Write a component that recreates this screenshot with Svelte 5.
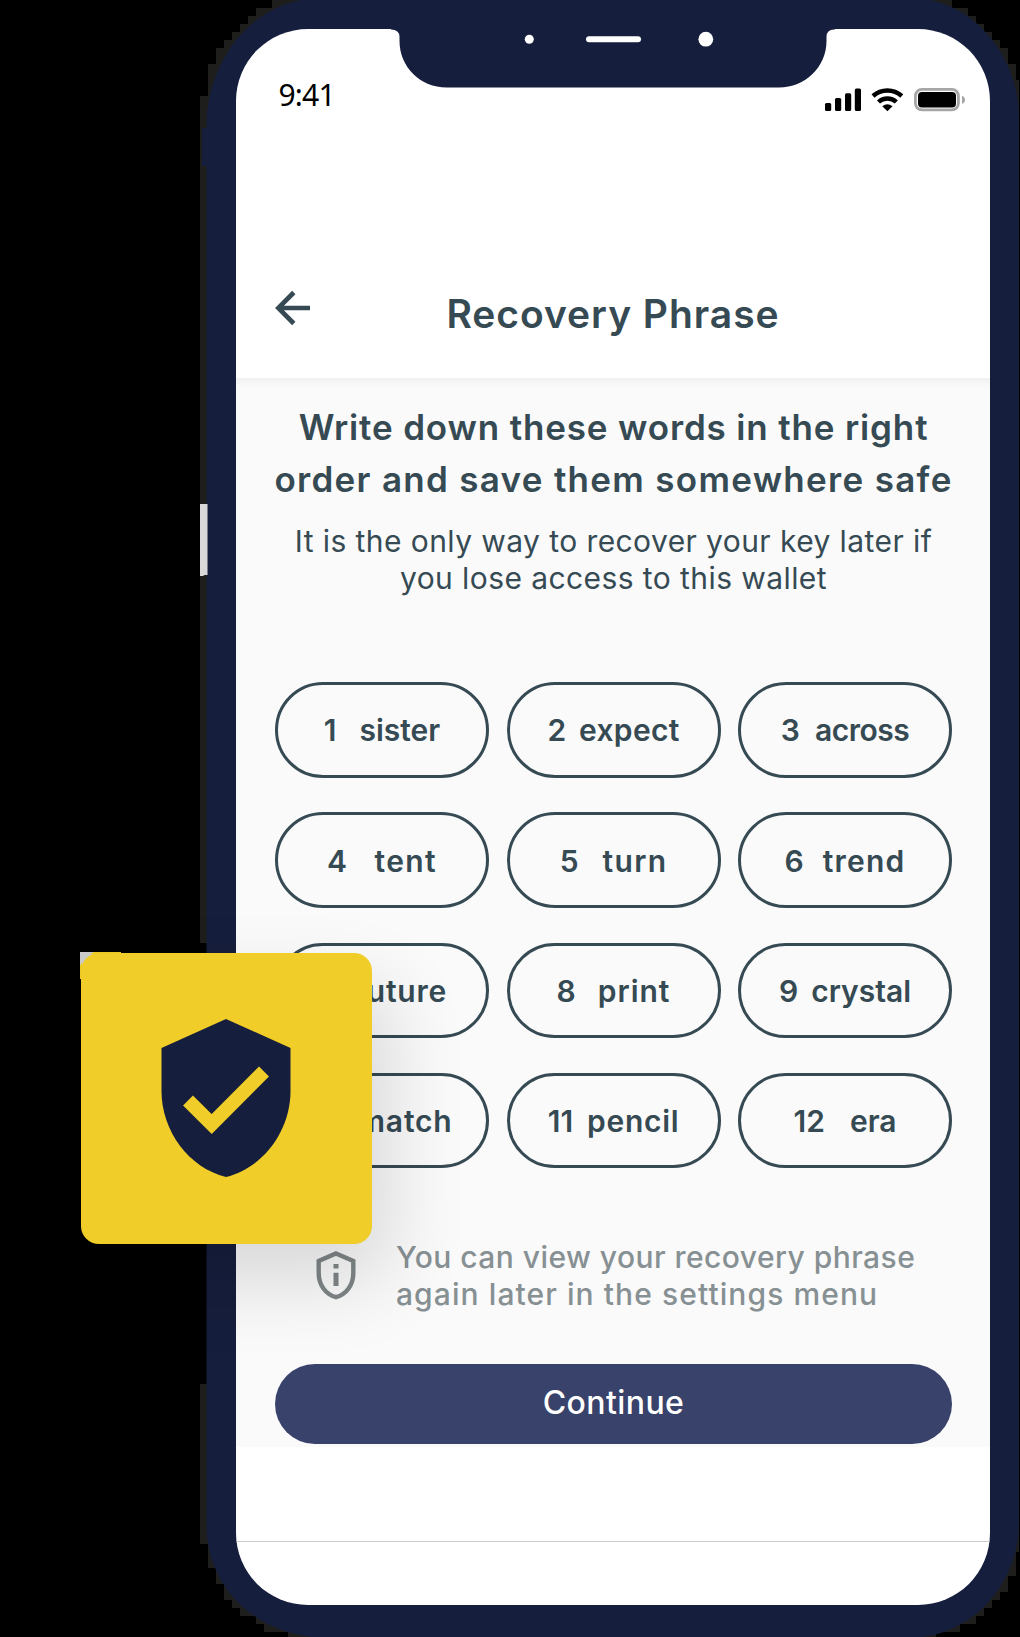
<script>
  const words = [
    { n: 1, word: 'sister', gap: 23, track: 0 },
    { n: 2, word: 'expect', gap: 13, track: 0.3 },
    { n: 3, word: 'across', gap: 15, track: -0.5 },
    { n: 4, word: 'tent', gap: 27.5, track: 1.4 },
    { n: 5, word: 'turn', gap: 24, track: 1.3 },
    { n: 6, word: 'trend', gap: 19, track: 1.2 },
    { n: 7, word: 'future', gap: 20, track: 0.8 },
    { n: 8, word: 'print', gap: 22, track: 1 },
    { n: 9, word: 'crystal', gap: 13, track: 0 },
    { n: 10, word: 'match', gap: 14, track: 0.8 },
    { n: 11, word: 'pencil', gap: 14, track: 0.7 },
    { n: 12, word: 'era', gap: 25, track: 0 }
  ];
</script>

<div class="stage">
  <svg class="device" viewBox="0 0 1020 1637" aria-hidden="true">
    <path
      fill="#1e1f1d"
      d="M272 0V8H256V16H248V24H240V32H232V40H224V48H216V64H208V96H200V943H208V1384H200V1544H208V1568H216V1584H224V1600H232V1608H240V1616H256V1624H264V1632H288V1637H936V1632H960V1624H976V1616H984V1608H992V1600H1000V1592H1008V1576H1016V1552H1019V80H1016V64H1008V48H1000V40H992V32H984V24H976V16H968V8H952V0Z"
    />
    <path fill="#161e3d" d="M202 128h6v38h-6z" />
    <path
      fill="#161e3d"
      d="M302 0C250 8 207 62 206.500 124V1526C207 1584 250 1630 312 1637H922C978 1630 1018 1580 1019 1524V116C1018 60 980 10 930 0Z"
    />
    <path fill="#d9d9d9" d="M200 504h7.500v71h-3l-1.500 1h-3z" />
  </svg>

  <main class="screen">
    <div class="notch">
      <svg viewBox="0 0 444 59" width="444" height="59" aria-hidden="true">
        <path
          fill="#161e3d"
          d="M0 0H444V.500H443Q435.500 .500 435.500 8V12C435.500 38 414 58.500 388 58.500H55.500C29.500 58.500 8.500 38 8.500 12V8Q8.500 .500 0 .500Z"
        />
        <circle cx="138.300" cy="10.200" r="4.500" fill="#fff" />
        <rect x="195" y="7.200" width="55" height="6" rx="3" fill="#fff" />
        <circle cx="314.800" cy="10.200" r="7.400" fill="#fff" />
      </svg>
    </div>

    <header class="status">
      <span class="time">9:41</span>
      <svg class="indicators" viewBox="0 0 142 26" width="142" height="26" aria-hidden="true">
        <rect x="1" y="16" width="6.200" height="8" rx="1.500" />
        <rect x="11" y="11" width="6.200" height="13" rx="1.500" />
        <rect x="21" y="6.200" width="6.200" height="17.800" rx="1.500" />
        <rect x="30.800" y="1.500" width="6.200" height="22.500" rx="1.500" />
        <g fill="none" stroke="#000" stroke-width="4.400">
          <path d="M49 9A21.500 21.500 0 0 1 77.800 9" />
          <path d="M54.500 15A13 13 0 0 1 72.300 15" />
        </g>
        <path d="M58.300 19.300Q63.400 15 68.500 19.300L63.400 24.300Z" />
        <rect x="91.400" y="2.400" width="43" height="20.400" rx="6.500" fill="none" stroke="#a6a6a6" stroke-width="2.800" />
        <rect x="94" y="5" width="38" height="15.600" rx="4" />
        <path fill="#a6a6a6" d="M138 8.700Q141 9.700 141 12.700T138 16.700Z" />
      </svg>
    </header>

    <nav class="titlebar">
      <svg class="back" viewBox="0 0 36 36" width="36" height="36" aria-hidden="true">
        <path d="M36 18H4M19.800 2.500L4.300 18L19.800 33.500" fill="none" stroke="#364a54" stroke-width="4.600" />
      </svg>
      <h1>Recovery Phrase</h1>
    </nav>

    <section class="body">
      <h2>
        <span class="line l1">Write down these words in the right</span>
        <span class="line l2">order and save them somewhere safe</span>
      </h2>
      <p class="lead">
        <span class="line">It is the only way to recover your key later if</span>
        <span class="line">you lose access to this wallet</span>
      </p>

      <div class="words">
        {#each words as item}
          <div class="pill" style="gap: {item.gap}px">
            <span>{item.n}</span>
            <span style="letter-spacing: {item.track}px">{item.word}</span>
          </div>
        {/each}
      </div>

      <div class="note">
        <svg viewBox="0 0 40 50" width="40" height="50" aria-hidden="true">
          <path d="M20 3.500L37.300 11V23C37.300 35 30.500 44.200 20 47.200C9.500 44.200 2.700 35 2.700 23V11Z" fill="none" stroke="#7f8687" stroke-width="4.400" />
          <path d="M17.500 14h5v4.500h-5zM17.500 22.800h5V36h-5z" fill="#7f8687" />
        </svg>
        <p>
          <span class="line l5">You can view your recovery phrase</span>
          <span class="line l6">again later in the settings menu</span>
        </p>
      </div>

      <button type="button">Continue</button>
    </section>

    <footer></footer>
  </main>

  <svg class="corner" viewBox="0 0 42 28" width="42" height="28" aria-hidden="true">
    <path fill="#ccc" d="M0 0H18V18H0Z" />
    <path fill="#f0cd28" d="M14 0H41V2H10ZM0 14L2 10V27H0Z" />
  </svg>
  <div class="card">
    <svg viewBox="0 0 130 158" width="130" height="158" aria-hidden="true">
      <path fill="#161e3d" d="M65 0L129.500 29V72C129.500 112 102 149 65 158C28 149 .500 112 .500 72V29Z" />
      <path fill="none" stroke="#f0cd28" stroke-width="14" d="M27 81.500L50.700 105L103 52.500" />
    </svg>
  </div>
</div>

<style>
  :global(body) {
    margin: 0;
    background: #000;
  }
  .stage {
    position: relative;
    box-sizing: border-box;
    width: 1020px;
    height: 1637px;
    padding: 29px 30px 32px 236px;
    overflow: hidden;
    background: #000;
    font-family: Inter, 'Open Sans', sans-serif;
    color: #364a54;
  }
  .device {
    position: absolute;
    inset: 0;
    width: 1020px;
    height: 1637px;
  }
  .screen {
    position: relative;
    display: flex;
    flex-direction: column;
    height: 1576px;
    border-radius: 72px;
    background: #fff;
    overflow: hidden;
  }
  h1, h2, p {
    margin: 0;
  }
  .notch {
    display: flex;
    justify-content: center;
    height: 59px;
  }
  .status {
    display: flex;
    justify-content: space-between;
    height: 26px;
    margin-top: -1px;
    padding: 0 24px 0 42.500px;
    color: #000;
  }
  .time {
    margin-top: -12px;
    font: 400 30px/40px 'Noto Sans', sans-serif;
    letter-spacing: -0.800px;
  }
  .titlebar {
    display: grid;
    grid-template-columns: 36px 1fr 36px;
    height: 90px;
    margin-top: 175px;
    padding: 0 38px;
  }
  .back {
    margin-top: 2px;
  }
  h1 {
    font-size: 39px;
    line-height: 52px;
    font-weight: 600;
    letter-spacing: 0.950px;
    text-align: center;
    white-space: nowrap;
  }
  .body {
    display: flex;
    flex-direction: column;
    box-sizing: border-box;
    height: 1069px;
    padding: 23px 38px 0 39px;
    background: linear-gradient(#f1f1f1, #fafafa 9px);
  }
  .line {
    display: block;
    white-space: nowrap;
  }
  h2 {
    display: flex;
    flex-direction: column;
    align-items: center;
    font-size: 35px;
    line-height: 52px;
    font-weight: 600;
  }
  .l1 {
    letter-spacing: 0.850px;
  }
  .l2 {
    letter-spacing: 1.300px;
  }
  .lead {
    display: flex;
    flex-direction: column;
    align-items: center;
    margin-top: 18px;
    font-size: 30px;
    line-height: 37px;
    letter-spacing: 0.420px;
  }
  .words {
    display: grid;
    grid-template-columns: repeat(3, 214px);
    justify-content: space-between;
    grid-auto-rows: 95.500px;
    row-gap: 34.800px;
    margin-top: 85px;
  }
  .pill {
    display: flex;
    align-items: center;
    justify-content: center;
    box-sizing: border-box;
    padding-top: 2px;
    border: 3px solid #364a54;
    border-radius: 48px;
    font-size: 30px;
    line-height: 37px;
    font-weight: 600;
  }
  .note {
    display: flex;
    gap: 40px;
    margin-top: 71px;
    padding-left: 41px;
    font-size: 30px;
    line-height: 37px;
    font-weight: 500;
    color: #879093;
  }
  .note svg {
    margin-top: 10.500px;
  }
  .l5 {
    letter-spacing: 0.450px;
  }
  .l6 {
    letter-spacing: 1.080px;
  }
  button {
    height: 80px;
    margin-top: 50.500px;
    padding: 0 0 1px;
    border: 0;
    border-radius: 40px;
    background: #38426a;
    color: #fff;
    font: 500 32px/40px Inter, sans-serif;
    letter-spacing: 0.400px;
  }
  footer {
    height: 94px;
    border-bottom: 1px solid #ccc;
  }
  .card {
    position: absolute;
    left: 81px;
    top: 953px;
    display: flex;
    align-items: center;
    justify-content: center;
    box-sizing: border-box;
    width: 291px;
    height: 291px;
    padding: 0 1px 2px 0;
    border-radius: 18px;
    background: #f0cd28;
    box-shadow: 16px 36px 80px rgba(0, 0, 0, 0.14);
  }
  .corner {
    position: absolute;
    left: 80px;
    top: 952px;
  }
</style>
